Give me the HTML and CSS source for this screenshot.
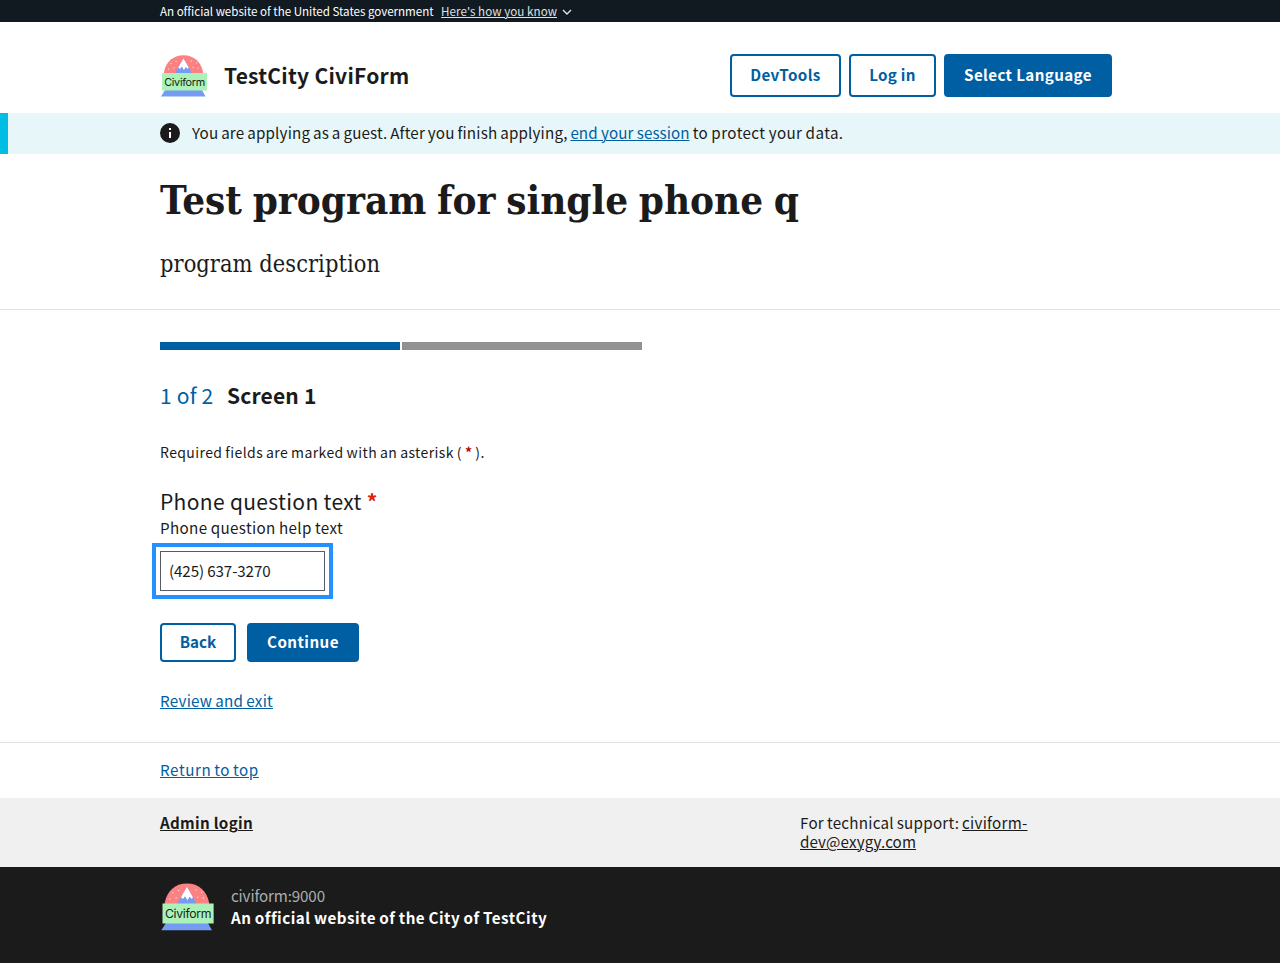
FILE: index.html
```
<!DOCTYPE html>
<html lang="en">
<head>
<meta charset="utf-8">
<title>TestCity CiviForm</title>
<link rel="stylesheet" href="styles.css">
</head>
<body>
<div class="gov-banner">
  <div class="wrap gov-row">
    <span class="t-gov">An official website of the United States government</span>
    <a class="t-how" href="#">Here's how you know</a>
    <svg class="chev" viewBox="0 0 10 6"><path d="m1 1 4 4 4-4" fill="none" stroke="#dfe1e2" stroke-width="1.400"/></svg>
  </div>
</div>
<header class="wrap site-header">
  <div class="brand">
    <svg class="logo" viewBox="0 0 48 44">
      <path d="M4 18C6 8 13 1.300 23.500 1.300S41 8 43 18v2H4z" fill="#fa8283"/>
      <path d="M14.500 20 23.500 4.500l9 15.500z" fill="#759cf3"/>
      <path d="m18.300 13.500 5.200-9 5.200 9-.8 1.500-2-2-2 3-2-3.500-2 2.500z" fill="#fff"/>
      <g fill="#fdd0d0"><circle cx="11" cy="9.500" r=".7"/><circle cx="16" cy="7.500" r=".7"/><circle cx="8.500" cy="15" r=".7"/><circle cx="14" cy="14" r=".7"/><circle cx="31.500" cy="7" r=".7"/><circle cx="36.500" cy="9" r=".7"/><circle cx="33" cy="13.500" r=".7"/><circle cx="38" cy="14" r=".7"/></g>
      <path d="M5 36h37l3.500 6.500H1z" fill="#759cf3"/>
      <path d="M2 19h45v17.500H2z" fill="#abf1b8"/>
      <text x="4.200" y="32" class="logo-text" textLength="41">Civiform</text>
    </svg>
    <span class="brand-name">TestCity CiviForm</span>
  </div>
  <nav class="nav">
    <a class="btn outline b1"><span>DevTools</span></a><a class="btn outline b2"><span>Log in</span></a><a class="btn b3"><span>Select Language</span></a>
  </nav>
</header>
<section class="alert">
  <div class="wrap alert-row">
    <svg class="info" viewBox="0 0 20 20"><circle cx="10" cy="10" r="10" fill="#1b1b1b"/><path d="M9 5h2v2H9zM9 9h2v6H9z" fill="#fff"/></svg>
    <p><span class="a1">You are applying as a guest. After you finish applying, </span><a class="a2" href="#">end your session</a><span class="a3"> to protect your data.</span></p>
  </div>
</section>
<section class="intro">
  <div class="wrap">
    <h1>Test program for single phone q</h1>
    <p class="desc">program description</p>
  </div>
</section>
<main class="wrap">
  <div class="progress"><i class="done"></i><i></i></div>
  <h2><span class="step">1 of 2</span><span class="screen">Screen 1</span></h2>
  <p class="required">Required fields are marked with an asterisk ( <b>*</b> ).</p>
  <label class="question">Phone question text <b>*</b></label>
  <p class="help">Phone question help text</p>
  <div class="field">(425) 637-3270</div>
  <div class="actions"><a class="btn outline b4"><span>Back</span></a><a class="btn b5"><span>Continue</span></a></div>
  <p class="review"><a href="#">Review and exit</a></p>
</main>
<footer>
  <div class="return"><div class="wrap"><a href="#">Return to top</a></div></div>
  <div class="support">
    <div class="wrap support-row">
      <a class="admin" href="#">Admin login</a>
      <p class="tech"><span>For technical support: </span><a class="m1" href="#">civiform-</a><br><a class="m2" href="#">dev@exygy.com</a></p>
    </div>
  </div>
  <div class="identifier">
    <div class="wrap id-row">
      <svg class="logo big" viewBox="0 0 48 44">
        <path d="M4 18C6 8 13 1.300 23.500 1.300S41 8 43 18v2H4z" fill="#fa8283"/>
        <path d="M14.500 20 23.500 4.500l9 15.500z" fill="#759cf3"/>
        <path d="m18.300 13.500 5.200-9 5.200 9-.8 1.500-2-2-2 3-2-3.500-2 2.500z" fill="#fff"/>
        <g fill="#fdd0d0"><circle cx="11" cy="9.500" r=".7"/><circle cx="16" cy="7.500" r=".7"/><circle cx="8.500" cy="15" r=".7"/><circle cx="14" cy="14" r=".7"/><circle cx="31.500" cy="7" r=".7"/><circle cx="36.500" cy="9" r=".7"/><circle cx="33" cy="13.500" r=".7"/><circle cx="38" cy="14" r=".7"/></g>
        <path d="M5 36h37l3.500 6.500H1z" fill="#759cf3"/>
        <path d="M2 19h45v17.500H2z" fill="#abf1b8"/>
        <text x="4.200" y="32" class="logo-text" textLength="41">Civiform</text>
      </svg>
      <div><p class="domain">civiform:9000</p><p class="official">An official website of the City of TestCity</p></div>
    </div>
  </div>
</footer>
</body>
</html>
```
FILE: styles.css
```
* { box-sizing: border-box; }
body, p, h1, h2 { margin: 0; }
body {
  font: 15.200px/22px "Noto Sans CJK SC", "Noto Sans", sans-serif;
  color: #1b1b1b;
  background: #fff;
}
a { color: #005ea2; text-decoration: underline; text-decoration-thickness: 1px; text-underline-offset: 1px; }
.wrap { width: 960px; margin: 0 auto; }
.logo-text { font: 10.800px Inter, sans-serif; fill: #16261a; }

.gov-banner { height: 22px; background: #111a20; color: #fff; font-size: 11.600px; }
.gov-row { display: flex; align-items: center; height: 22px; }
.t-gov { letter-spacing: -.03px; }
.t-how { margin-left: 7.500px; color: #dfe1e2; letter-spacing: .05px; }
.chev { width: 10px; height: 6px; margin-left: 5px; margin-top: 2px; }

.site-header { height: 91px; display: flex; justify-content: space-between; padding: 32px 8px 0 0; }
.brand { display: flex; height: 44px; align-items: flex-start; }
.logo { width: 48px; height: 44px; }
.brand-name { margin: 5px 0 0 16px; font-size: 21px; font-weight: 700; line-height: 32px; letter-spacing: .25px; }
.nav { display: flex; gap: 8px; }
.btn {
  display: flex; align-items: center; justify-content: center;
  height: 43px; border: 2px solid #005ea2; border-radius: 4px; padding-bottom: 3px;
  background: #005ea2; color: #fff; font-weight: 700; text-decoration: none; white-space: nowrap;
  letter-spacing: .37px;
}
.outline { background: #fff; color: #005ea2; }
.b1 { width: 111px; }
.b2 { width: 87px; letter-spacing: .25px; }
.b3 { width: 168px; }

.alert { height: 41px; background: #e7f6f8; border-left: 8px solid #00bde3; padding-right: 8px; }
.alert-row { display: flex; align-items: flex-start; padding-top: 10px; }
.info { width: 20px; height: 20px; margin-right: 12px; }
.alert p { white-space: pre; margin-top: -2px; }
.a1 { letter-spacing: .17px; word-spacing: -.73px; }
.a2 { letter-spacing: .04px; }
.a3 { letter-spacing: .4px; word-spacing: -.6px; }

.intro { height: 156px; padding-top: 18px; border-bottom: 1px solid #dfe1e2; }
h1 { font: 700 40px/56px "DejaVu Serif Condensed", "DejaVu Serif", serif; font-stretch: condensed; white-space: nowrap; word-spacing: -1.800px; }
.desc { font: 23.400px/32px "DejaVu Serif Condensed", "DejaVu Serif", serif; font-stretch: condensed; margin-top: 20px; letter-spacing: .05px; }

.progress { display: flex; gap: 2px; padding-top: 32px; }
.progress i { width: 240px; height: 8px; background: #919191; }
.progress .done { background: #005ea2; }
h2 { font-size: 21px; line-height: 32px; margin-top: 29px; font-weight: 700; }
.step { color: #005ea2; font-weight: 400; margin-right: 13.500px; letter-spacing: .2px; }
.screen { letter-spacing: .18px; }
.required { font-size: 14px; line-height: 22px; margin-top: 30px; letter-spacing: .4px; word-spacing: -.6px; }
.required b { color: #b50909; }
.question { display: block; font-size: 21px; line-height: 30px; margin-top: 23px; letter-spacing: .33px; }
.question b { color: #e52207; }
.help { line-height: 22px; letter-spacing: .35px; word-spacing: -.5px; }
.field { width: 165px; height: 40px; margin-top: 13px; border: 1px solid #565c65; outline: 4px solid #2491ff; outline-offset: 4px; padding: 0 8px; line-height: 36px; letter-spacing: -.12px; }
.actions { display: flex; gap: 11px; margin-top: 32px; }
.actions .btn { height: 39px; }
.btn.b4 { width: 76px; letter-spacing: 0; }
.btn.b5 { width: 112px; letter-spacing: .45px; }
.review { margin-top: 27px; height: 53px; letter-spacing: .25px; word-spacing: -.6px; }

.return { height: 56px; border-top: 1px solid #dfe1e2; padding-top: 15px; letter-spacing: .6px; word-spacing: -1.200px; }
.support { height: 69px; background: #f0f0f0; padding-top: 15px; line-height: 19px; }
.support a { color: #1b1b1b; }
.support-row { display: grid; grid-template-columns: 640px 1fr; }
.admin { font-weight: 700; justify-self: start; letter-spacing: .3px; }
.tech { white-space: pre; letter-spacing: .24px; word-spacing: -.7px; }
.m2 { letter-spacing: .1px; }
.identifier { height: 96px; background: #1b1b1b; padding-top: 15px; color: #fff; }
.id-row { display: flex; }
.big { width: 55px; height: 50px; margin-right: 16px; }
.domain { color: #a9aeb1; margin-top: 2px; letter-spacing: -.15px; }
.official { font-weight: 700; letter-spacing: .5px; word-spacing: -.6px; }
```
